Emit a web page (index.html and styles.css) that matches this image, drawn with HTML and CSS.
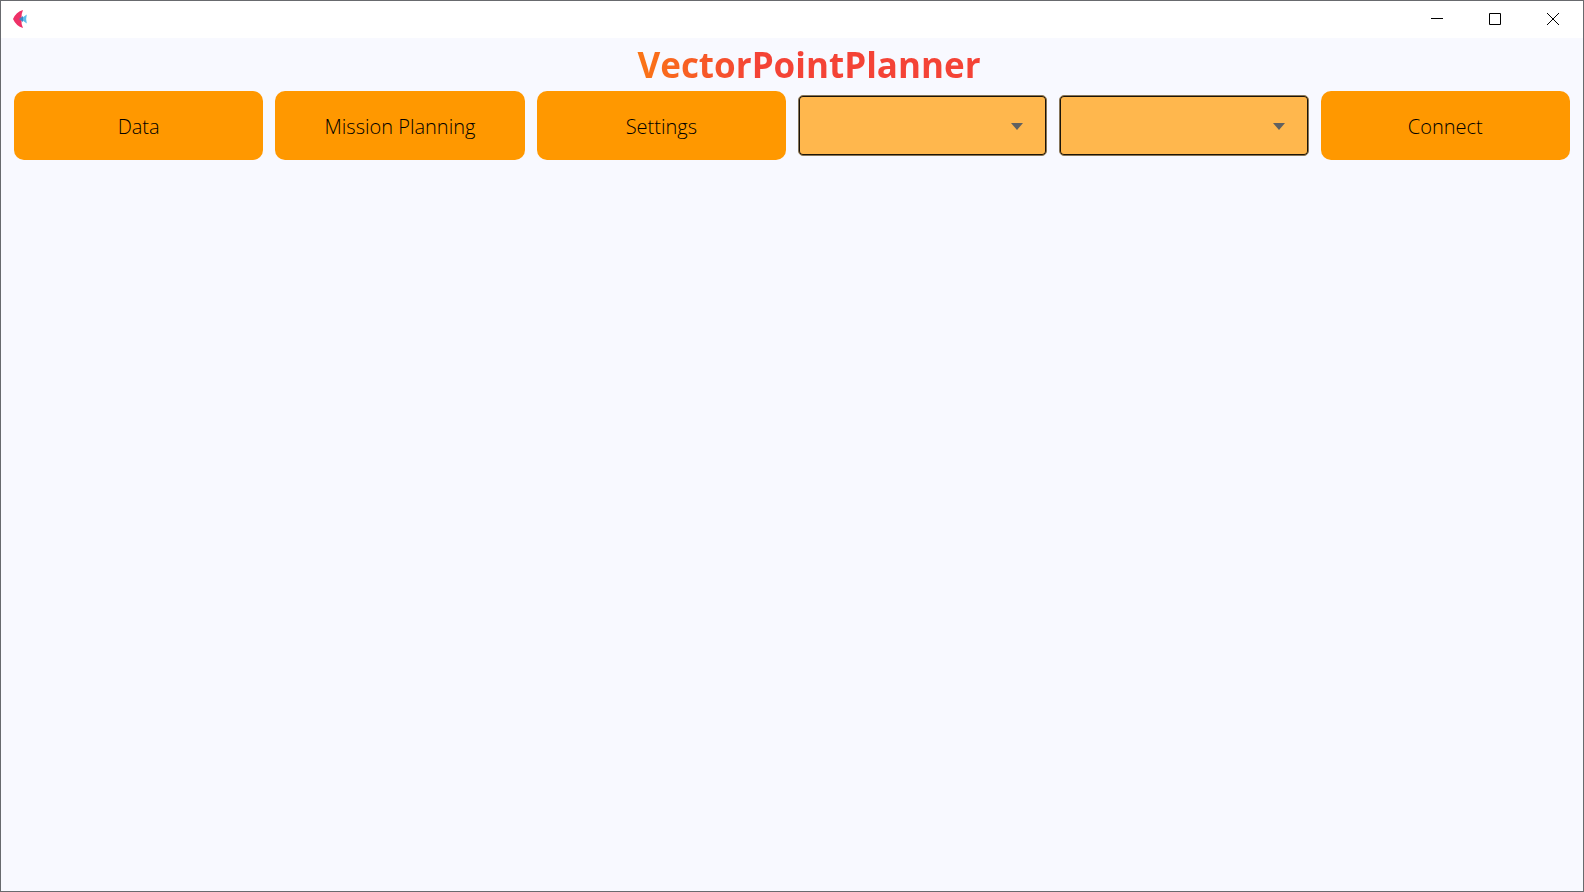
FILE: index.html
```html
<!DOCTYPE html>
<html lang="en">
<head>
<meta charset="utf-8">
<title>VectorPointPlanner</title>
<link rel="stylesheet" href="styles.css">
</head>
<body>
<div class="window">
  <header class="titlebar">
    <svg class="logo" width="16" height="20" viewBox="0 0 16 20" aria-hidden="true">
      <path d="M11 1 Q9 5 9.500 10 Q9 15 11 19 Q4 17 1 10 Q4 3 11 1Z" fill="#ee3167"/>
      <path d="M8.500 10 L14.800 5.500 Q13.500 10 14.800 14.500Z" fill="#5cbcec"/>
      <path d="M7 10 L11 7 V13Z" fill="#3f86c4"/>
    </svg>
    <div class="controls">
      <button class="control" aria-label="Minimize"><svg width="12" height="12" viewBox="0 0 12 12"><path d="M0 5.500H12"/></svg></button>
      <button class="control" aria-label="Maximize"><svg width="12" height="12" viewBox="0 0 12 12"><path d="M.5 .5H11.500V11.500H.5Z"/></svg></button>
      <button class="control" aria-label="Close"><svg width="12" height="12" viewBox="0 0 12 12"><path d="M0 0L12 12M12 0L0 12"/></svg></button>
    </div>
  </header>
  <main class="content">
    <h1 class="title">VectorPointPlanner</h1>
    <nav class="toolbar">
      <button class="action">Data</button>
      <button class="action">Mission Planning</button>
      <button class="action">Settings</button>
      <select class="dropdown" aria-label="Port"></select>
      <select class="dropdown" aria-label="Baud rate"></select>
      <button class="action">Connect</button>
    </nav>
  </main>
</div>
</body>
</html>
```
FILE: styles.css
```css
* { box-sizing: border-box; }
body { margin: 0; font-family: "Segoe UI", "Open Sans", "Noto Sans", sans-serif; }
.window {
  min-height: 100vh;
  border: 1px solid #686a6e;
  background: #f8f9ff;
}
.titlebar {
  display: flex;
  align-items: center;
  justify-content: space-between;
  height: 37px;
  padding: 0 1px 1px 11px;
  background: #fff;
}
.controls { display: flex; height: 100%; }
.control {
  display: flex;
  align-items: center;
  justify-content: center;
  width: 58px;
  padding: 0;
  border: 0;
  background: transparent;
}
.control svg { fill: none; stroke: #000; stroke-width: 1; }
.content { padding: 0 13px; }
.title {
  width: fit-content;
  margin: 0 auto;
  padding: 1px 0 0 34px;
  font-size: 35px;
  line-height: 52px;
  font-weight: 700;
  color: transparent;
  background: linear-gradient(90deg, #ff9800 -44px, #f44336 151px);
  -webkit-background-clip: text;
  background-clip: text;
}
.toolbar {
  display: grid;
  grid-template-columns: repeat(6, 1fr);
  align-items: center;
  gap: 12px;
}
.action {
  height: 69px;
  padding: 2px 0 0;
  border: 0;
  border-radius: 10px;
  background: #ff9800;
  color: #000;
  font-family: inherit;
  font-size: 20px;
  font-weight: 300;
}
.dropdown {
  width: 100%;
  height: 61px;
  border: 1px solid #85755a;
  border-radius: 5px;
  box-shadow: inset 0 0 0 1px #1c1408;
  appearance: none;
  background: #ffb74d url("data:image/svg+xml,%3Csvg xmlns='http://www.w3.org/2000/svg' width='12' height='8'%3E%3Cpath d='M0 1H12L6 8Z' fill='%23616161'/%3E%3C/svg%3E") no-repeat right 23px center;
}
```
